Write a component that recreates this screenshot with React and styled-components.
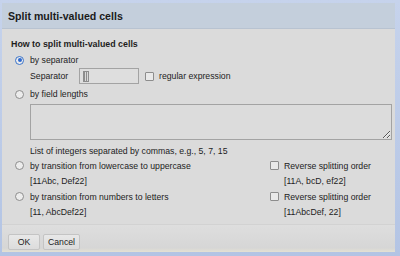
import React from 'react';
import styled, { createGlobalStyle } from 'styled-components';

const GlobalStyle = createGlobalStyle`
  html, body {
    margin: 0;
    padding: 0;
    background: #b3c4e4;
  }
  body {
    font-family: "Liberation Sans", Arial, sans-serif;
    color: #222;
  }
`;

const Frame = styled.div`
  width: 400px;
  height: 256px;
  box-sizing: border-box;
  padding: 3px 5px 4px 2px;
  background: linear-gradient(#c6d3ec, #b3c4e4);
`;

const Dialog = styled.div`
  display: flex;
  flex-direction: column;
  height: 100%;
  background: #dbdbdb;
`;

const TitleBar = styled.div`
  height: 25px;
  display: flex;
  align-items: center;
  padding-left: 6px;
  background: #c4cfdc;
  border-bottom: 1px solid #b8c3d1;
  font-size: 10.6px;
  font-weight: bold;
  color: #1b1b1b;
`;

const Body = styled.div`
  flex: 1;
  padding: 9px 0 0 9px;
  font-size: 8.7px;
`;

const Heading = styled.div`
  height: 12px;
  line-height: 12px;
  font-size: 8.85px;
  font-weight: bold;
  color: #1e1e1e;
`;

const Row = styled.div`
  display: flex;
  align-items: center;
  height: ${p => p.$h || 14}px;
  margin-top: ${p => p.$mt || 0}px;
  padding-left: ${p => p.$indent || 0}px;
`;

const Radio = styled.span`
  width: 9px;
  height: 9px;
  box-sizing: border-box;
  border-radius: 50%;
  border: 1px solid ${p => (p.$on ? '#3b74c9' : '#8d8d8d')};
  background: #ececec;
  display: inline-flex;
  align-items: center;
  justify-content: center;
  margin-right: 6px;
  flex-shrink: 0;

  &::after {
    content: '';
    display: ${p => (p.$on ? 'block' : 'none')};
    width: 4px;
    height: 4px;
    border-radius: 50%;
    background: #2f6ad0;
  }
`;

const Check = styled.span`
  width: 9px;
  height: 9px;
  box-sizing: border-box;
  border: 1px solid #8d8d8d;
  border-radius: 1px;
  background: #e9e9e9;
  margin-right: 5px;
  flex-shrink: 0;
`;

const FieldLabel = styled.span`
  width: 49px;
`;

const SepField = styled.div`
  width: 60px;
  height: 16px;
  box-sizing: border-box;
  border: 1px solid #a3a3a3;
  background: #dedede;
  display: flex;
  align-items: center;
  padding-left: 3px;
  margin-right: 6px;
`;

const TabGlyph = styled.span`
  width: 6px;
  height: 11px;
  box-sizing: border-box;
  border: 1px solid #8c8c8c;
  background: repeating-linear-gradient(90deg, #8c8c8c 0 1px, #d8d8d8 1px 2px);
`;

const Lengths = styled.textarea`
  display: block;
  width: 362px;
  height: 36px;
  box-sizing: border-box;
  margin: 3px 0 0 19px;
  border: 1px solid #a3a3a3;
  background: #dcdcdc;
  resize: both;
  outline: none;
`;

const Hint = styled.div`
  height: 14px;
  line-height: 14px;
  margin: 4px 0 0 19px;
`;

const Options = styled.div`
  display: grid;
  grid-template-columns: 255px 1fr;
  grid-auto-rows: 15.5px;
  padding-left: 4px;
`;

const Cell = styled.div`
  display: flex;
  align-items: center;
  padding-left: ${p => p.$indent || 0}px;
`;

const Footer = styled.div`
  height: 28px;
  box-sizing: border-box;
  display: flex;
  gap: 3px;
  padding: 9px 0 0 6px;
  background: linear-gradient(#dedede, #d6d6d6 85%, #e4e1d3);
  border-top: 1px solid #d2d2d2;
`;

const Button = styled.button`
  height: 16px;
  width: ${p => p.$w}px;
  padding: 0;
  font-family: "Liberation Sans", Arial, sans-serif;
  font-size: 8.7px;
  color: #222;
  background: linear-gradient(#e8e8e8, #dcdcdc);
  border: 1px solid #c4c4c4;
  border-radius: 2px;
`;

const App = () => (
  <>
    <GlobalStyle />
    <Frame>
      <Dialog>
        <TitleBar>Split multi-valued cells</TitleBar>
        <Body>
          <Heading>How to split multi-valued cells</Heading>
          <Row $mt={3} $indent={4}>
            <Radio $on />
            by separator
          </Row>
          <Row $h={16} $mt={1} $indent={19}>
            <FieldLabel>Separator</FieldLabel>
            <SepField>
              <TabGlyph />
            </SepField>
            <Check />
            regular expression
          </Row>
          <Row $mt={3} $indent={4}>
            <Radio />
            by field lengths
          </Row>
          <Lengths readOnly />
          <Hint>List of integers separated by commas, e.g., 5, 7, 15</Hint>
          <Options>
            <Cell>
              <Radio />
              by transition from lowercase to uppercase
            </Cell>
            <Cell>
              <Check />
              Reverse splitting order
            </Cell>
            <Cell $indent={15}>[11Abc, Def22]</Cell>
            <Cell $indent={14}>[11A, bcD, ef22]</Cell>
            <Cell>
              <Radio />
              by transition from numbers to letters
            </Cell>
            <Cell>
              <Check />
              Reverse splitting order
            </Cell>
            <Cell $indent={15}>[11, AbcDef22]</Cell>
            <Cell $indent={14}>[11AbcDef, 22]</Cell>
          </Options>
        </Body>
        <Footer>
          <Button $w={32}>OK</Button>
          <Button $w={37}>Cancel</Button>
        </Footer>
      </Dialog>
    </Frame>
  </>
);

export default App;
